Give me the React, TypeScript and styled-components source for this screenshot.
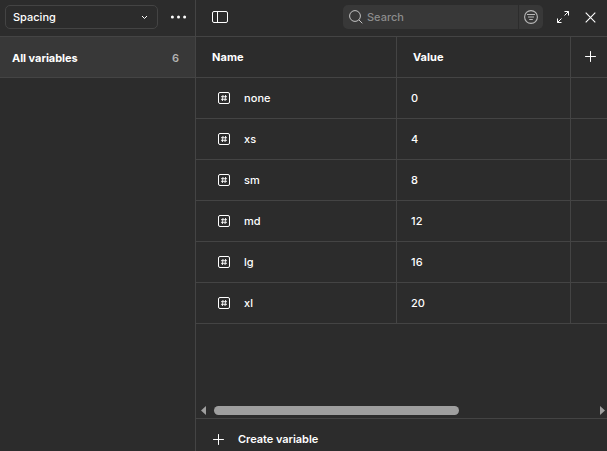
import React from 'react';
import styled, { createGlobalStyle } from 'styled-components';

const line = '#444444';

const GlobalStyle = createGlobalStyle`
  * { box-sizing: border-box; }
  body {
    margin: 0;
    background: #2c2c2c;
    color: #ffffff;
    font-family: Inter, 'Liberation Sans', sans-serif;
    font-size: 11px;
    font-weight: 550;
    line-height: 16px;
    overflow: hidden;
  }
  button { font: inherit; color: inherit; background: none; border: 0; padding: 0; }
  svg { display: block; flex: none; }
`;

const Window = styled.div`
  display: grid;
  grid-template-columns: 196px 1fr;
  width: 607px;
  height: 451px;
`;

const Sidebar = styled.aside`
  border-right: 1px solid ${line};
`;

const SidebarHeader = styled.div`
  display: flex;
  align-items: center;
  height: 37px;
  padding: 0 8px 3px 5px;
  border-bottom: 1px solid ${line};
`;

const CollectionSelect = styled.button`
  display: flex;
  align-items: center;
  justify-content: space-between;
  width: 153px;
  height: 24px;
  margin-top: 1px;
  padding: 0 9px 0 7px;
  border: 1px solid ${line};
  border-radius: 5px;
  letter-spacing: 0;
`;

const MoreButton = styled.button`
  margin-left: 12px;
`;

const GroupRow = styled.div`
  display: flex;
  justify-content: space-between;
  align-items: center;
  height: 41px;
  padding: 1px 16px 0 12px;
  background: #383838;
  border-bottom: 1px solid ${line};
  font-weight: 700;
  letter-spacing: -0.04px;
`;

const Count = styled.span`
  color: #b3b3b3;
  font-weight: 600;
`;

const Main = styled.main`
  display: flex;
  flex-direction: column;
  min-width: 0;
`;

const Toolbar = styled.header`
  display: flex;
  align-items: center;
  height: 37px;
  padding: 0 11px 2px 16px;
  border-bottom: 1px solid ${line};
`;

const SearchBox = styled.div`
  display: flex;
  width: 200px;
  height: 24px;
  margin: 0 13px 0 auto;
  border-radius: 5px;
  background: #383838;
`;

const SearchField = styled.div`
  display: flex;
  flex: 1;
  align-items: center;
  gap: 4px;
  padding-left: 6px;
  color: #8c8c8c;
`;

const FilterButton = styled.button`
  display: flex;
  align-items: center;
  justify-content: center;
  width: 25px;
  border-left: 1px solid #2c2c2c;
`;

const CloseButton = styled.button`
  margin-left: 15px;
`;

const Row = styled.div`
  display: grid;
  grid-template-columns: 201px 174px 1fr;
  height: 41px;
  border-bottom: 1px solid ${line};
`;

const Cell = styled.div<{ $inset: number }>`
  display: flex;
  align-items: center;
  gap: 14px;
  padding: 0 0 0 ${(p) => p.$inset}px;
  letter-spacing: 0.06px;
  &:not(:last-child) { border-right: 1px solid ${line}; }
`;

const HeadCell = styled(Cell)`
  font-weight: 700;
`;

const AddCell = styled(Cell)`
  padding-bottom: 1px;
`;

const ScrollArea = styled.div`
  display: flex;
  align-items: center;
  height: 15px;
  margin-top: auto;
  padding: 0 2px 0 5px;
`;

const Thumb = styled.div`
  width: 245px;
  height: 9px;
  margin: 0 auto 0 8px;
  border-radius: 5px;
  background: #9f9f9f;
`;

const Footer = styled.button`
  display: flex;
  align-items: center;
  gap: 14px;
  height: 33px;
  padding: 8px 0 0 17px;
  border-top: 1px solid ${line};
  font-weight: 600;
`;

const FooterLabel = styled.span`
  letter-spacing: -0.04px;
`;

const Plus = () => (
  <svg width="11" height="11" viewBox="0 0 11 11" stroke="#fff" strokeLinecap="round">
    <path d="M5.5 .5v10M.5 5.5h10" />
  </svg>
);

const NumberIcon = () => (
  <svg width="12" height="12" viewBox="0 0 12 12" fill="none" stroke="#fff">
    <rect x=".5" y=".5" width="11" height="11" rx="1.5" />
    <path d="M5 3 4.4 9M7.6 3 7 9M3 4.7h6M3 7.3h6" strokeWidth=".9" />
  </svg>
);

const variables = [
  ['none', '0'],
  ['xs', '4'],
  ['sm', '8'],
  ['md', '12'],
  ['lg', '16'],
  ['xl', '20'],
];

export default function App() {
  return (
    <>
      <GlobalStyle />
      <Window>
        <Sidebar>
          <SidebarHeader>
            <CollectionSelect>
              Spacing
              <svg width="7" height="5" viewBox="0 0 7 5" fill="none" stroke="#fff">
                <path d="M1 1 3.5 3.5 6 1" />
              </svg>
            </CollectionSelect>
            <MoreButton aria-label="More">
              <svg width="17" height="4" viewBox="0 0 17 4" fill="#fff">
                <circle cx="2.4" cy="2" r="1.5" />
                <circle cx="8.5" cy="2" r="1.5" />
                <circle cx="14.6" cy="2" r="1.5" />
              </svg>
            </MoreButton>
          </SidebarHeader>
          <GroupRow>
            All variables
            <Count>6</Count>
          </GroupRow>
        </Sidebar>
        <Main>
          <Toolbar>
            <svg width="16" height="12" viewBox="0 0 16 12" fill="none" stroke="#fff">
              <rect x=".5" y=".5" width="15" height="11" rx="1.5" />
              <path d="M5.5 1v10" />
            </svg>
            <SearchBox>
              <SearchField>
                <svg width="14" height="14" viewBox="0 0 14 14" fill="none" stroke="#c4c4c4">
                  <circle cx="6" cy="6" r="5.4" />
                  <path d="m9.8 9.8 3.5 3.5" />
                </svg>
                Search
              </SearchField>
              <FilterButton aria-label="Filter">
                <svg width="14" height="14" viewBox="0 0 14 14" fill="none" stroke="#b8b8b8" strokeWidth="1.1">
                  <circle cx="7" cy="7" r="6.4" />
                  <path d="M3 4.5h8M4 7h6M5.2 9.5h3.6" />
                </svg>
              </FilterButton>
            </SearchBox>
            <svg width="14" height="14" viewBox="0 0 14 14" fill="none" stroke="#fff">
              <path d="M8.5 1.5h4v4M12.5 1.5l-4 4M1.5 8.5v4h4M1.5 12.5l4-4" />
            </svg>
            <CloseButton aria-label="Close">
              <svg width="11" height="11" viewBox="0 0 11 11" stroke="#fff" strokeWidth="1.1">
                <path d="m.7.7 9.6 9.6M10.3.7.7 10.3" />
              </svg>
            </CloseButton>
          </Toolbar>
          <Row>
            <HeadCell $inset={16}>Name</HeadCell>
            <HeadCell $inset={16}>Value</HeadCell>
            <AddCell $inset={14}><Plus /></AddCell>
          </Row>
          {variables.map(([name, value]) => (
            <Row key={name}>
              <Cell $inset={22}>
                <NumberIcon />
                {name}
              </Cell>
              <Cell $inset={14}>{value}</Cell>
              <Cell $inset={0} />
            </Row>
          ))}
          <ScrollArea>
            <svg width="5" height="9" viewBox="0 0 5 9" fill="#9f9f9f"><path d="M5 0v9L0 4.5z" /></svg>
            <Thumb />
            <svg width="5" height="9" viewBox="0 0 5 9" fill="#9f9f9f"><path d="M0 0v9l5-4.5z" /></svg>
          </ScrollArea>
          <Footer>
            <Plus />
            <FooterLabel>Create variable</FooterLabel>
          </Footer>
        </Main>
      </Window>
    </>
  );
}
